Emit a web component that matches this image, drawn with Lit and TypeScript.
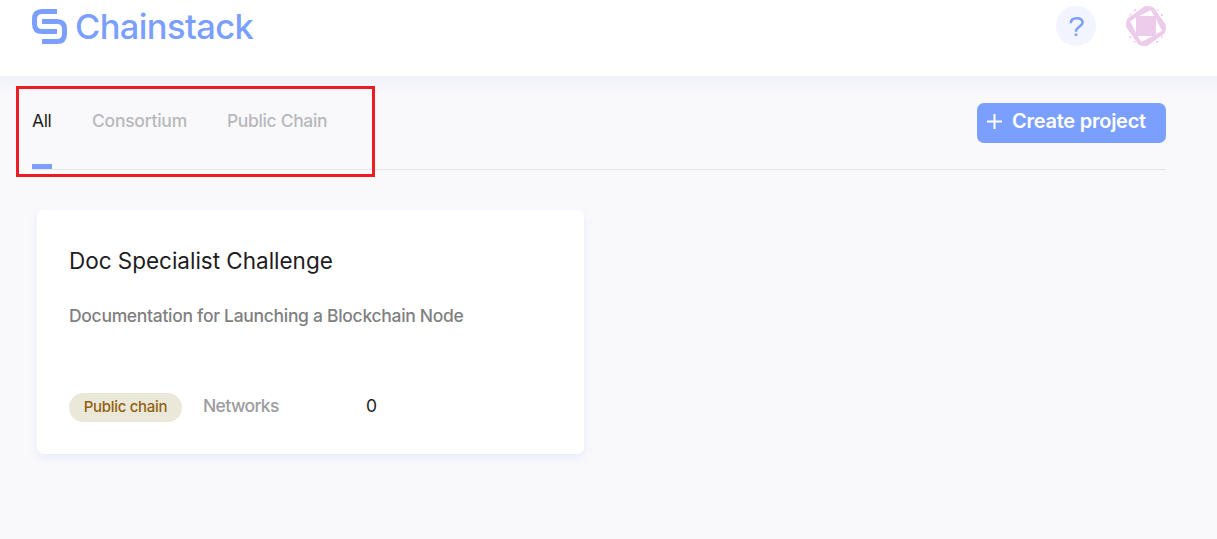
import { LitElement, html, svg, css } from "lit";
import { customElement } from "lit/decorators.js";

@customElement("app-root")
export class AppRoot extends LitElement {
  static styles = css`
    :host { display: block; height: 539px; overflow: hidden; position: relative; background: #f9f9fc; font-family: Inter, "Liberation Sans", sans-serif; color: #1d1d23; }
    * { box-sizing: border-box; }
    header { height: 76px; background: #fff; display: flex; align-items: flex-start; padding: 6px 51px 0 32px; }
    .logo { margin-top: 3px; width: 35px; height: 35px; flex: none; }
    .brand { margin: 1px 0 0 8px; font-size: 34.5px; line-height: 40px; font-weight: 550; letter-spacing: -.62px; color: #7a9fff; white-space: nowrap; }
    .help { margin-left: auto; width: 40px; height: 40px; border-radius: 50%; background: #f2f5ff; }
    .avatar { margin-left: 30px; width: 40px; height: 40px; border-radius: 50%; }
    svg { display: block; }
    main { padding: 0 51px 0 32px; height: 463px; background: linear-gradient(#f1f3f9, #f9f9fc 20px); }
    .bar { height: 94px; display: flex; justify-content: space-between; border-bottom: 1px solid #e6e7ea; }
    nav { display: flex; gap: 40px; }
    .tab { height: 93px; padding-top: 34px; font-size: 17.5px; line-height: 22px; letter-spacing: -.35px; font-weight: 450; color: #b8b8bb; white-space: nowrap; border-bottom: 5px solid transparent; }
    .tab:nth-child(2) { letter-spacing: -.25px; }
    .tab.active { color: #1d1d23; border-color: #7a9fff; width: 20px; font-weight: 400; }
    .create { margin: 27px 0 0; width: 189px; height: 40px; border: 0; padding: 0 0 3px 10px; border-radius: 7px; background: #7a9fff; color: #fff; display: flex; align-items: center; font: 600 20px/24px Inter, sans-serif; letter-spacing: -.25px; white-space: nowrap; }
    .create svg { margin: 0 10px 0 0; flex: none; }
    .create span { margin-top: -1px; }
    .card { margin: 40px 0 0 5px; width: 547px; height: 244px; border-radius: 7px; background: #fff; padding: 37px 32px 0; box-shadow: 0 4px 10px rgba(122, 150, 230, .12); }
    h2 { margin: 0; font-size: 22.5px; line-height: 28px; font-weight: 420; letter-spacing: -.02px; white-space: nowrap; }
    p { margin: 30px 0 0; font-size: 17.5px; line-height: 22px; font-weight: 450; letter-spacing: -.3px; color: #7f7f82; white-space: nowrap; }
    .meta { display: flex; margin-top: 66px; }
    .pill { width: 113px; height: 29px; border-radius: 15px; background: #eae9d9; color: #93600f; font-size: 15px; line-height: 28px; font-weight: 500; letter-spacing: -.3px; text-align: center; white-space: nowrap; }
    .label { margin-left: 21px; width: 163px; font-size: 17.5px; line-height: 26px; font-weight: 450; letter-spacing: -.62px; color: #9c9c9f; }
    .count { font-size: 17.5px; line-height: 26px; }
    .mark { position: absolute; left: 16px; top: 86px; width: 359px; height: 91px; border: 3px solid #ed1c24; }
  `;
  render() {
    return html`
      <header>
        <svg class="logo" viewBox="32 9 35 35" fill="none" stroke="#7a9fff" stroke-width="5"><path d="M57 11.5H42C37 11.5 34.5 14 34.5 19V24C34.5 29 37 31.5 42 31.5H57M42 21.5H57C62 21.5 64.5 24 64.5 29V34C64.5 39 62 41.5 57 41.5H42"/></svg>
        <span class="brand">Chainstack</span>
        <svg class="help" viewBox="0 0 40 40" fill="none" stroke="#7a9fff" stroke-width="2.5"><path d="M14.8 17.2C14.8 13.8 17.2 12.2 20.8 12.2C24.5 12.2 26.6 14 26.6 16.6C26.6 20.7 20 20.3 20 25.7"/><path d="M18.7 28.7h2.6" stroke-width="2.6"/></svg>
        <svg class="avatar" viewBox="-20 -20 40 40" fill="#edcbea">
          <rect x="-10" y="-10" width="20" height="20"/>
          ${[0, 90, 180, 270].map((a) => svg`<g transform="rotate(${a})"><path d="M-20 -6.5L-1 -20H5L7 -17L-10 -8.5L-20 -2Z"/><path d="M-18 -10.5L-15 -13.5V-10.5Z"/><path d="M-13.5 -15L-10 -18V-15Z"/></g>`)}
        </svg>
      </header>
      <main>
        <div class="bar">
          <nav><div class="tab active">All</div><div class="tab">Consortium</div><div class="tab">Public Chain</div></nav>
          <button class="create"><svg width="15" height="15" viewBox="0 0 15 15" stroke="#fff" stroke-width="2"><path d="M7.5 0V15M0 7.5H15"/></svg><span>Create project</span></button>
        </div>
        <section class="card">
          <h2>Doc Specialist Challenge</h2>
          <p>Documentation for Launching a Blockchain Node</p>
          <div class="meta"><span class="pill">Public chain</span><span class="label">Networks</span><span class="count">0</span></div>
        </section>
      </main>
      <div class="mark"></div>`;
  }
}
